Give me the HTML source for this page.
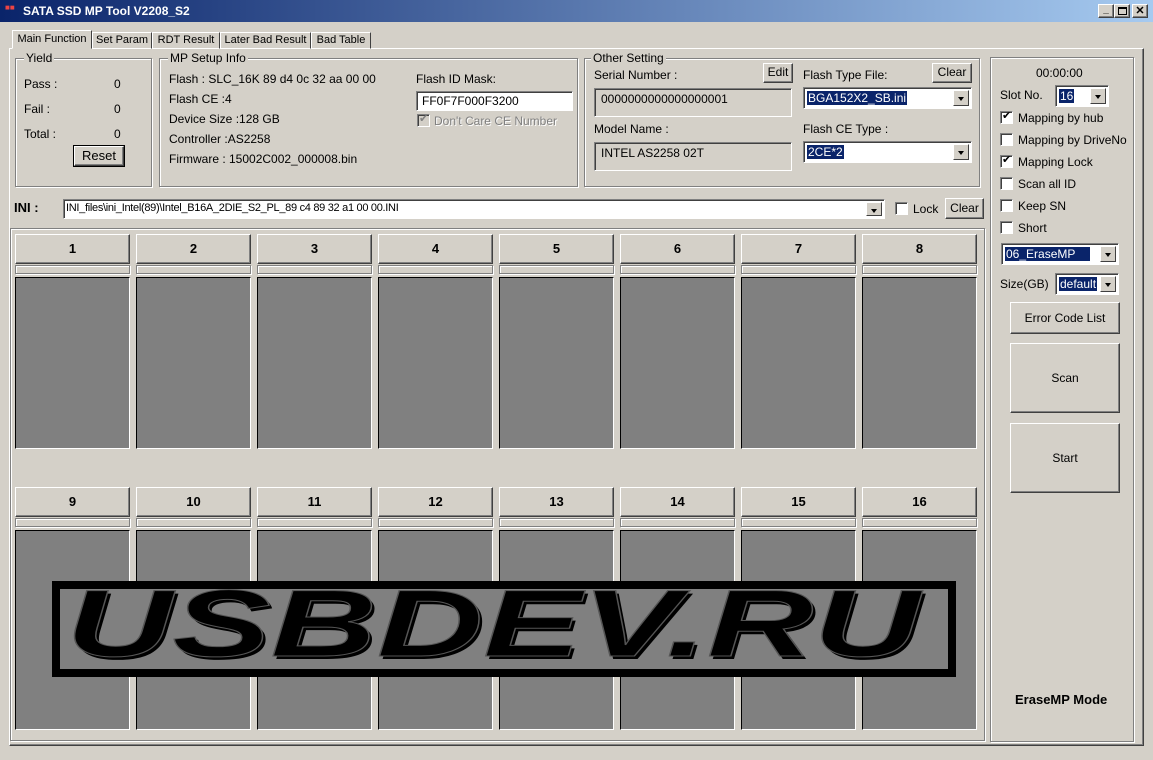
<!DOCTYPE html>
<html><head><meta charset="utf-8"><style>
*{box-sizing:border-box;margin:0;padding:0}
body{width:1153px;height:760px;background:#d4d0c8;font-family:"Liberation Sans",sans-serif;font-size:12px;color:#000;position:relative;overflow:hidden}
.a{position:absolute}
.r{position:absolute;background:#d4d0c8;border:1px solid;border-color:#fff #404040 #404040 #fff;box-shadow:inset -1px -1px #808080;text-align:center}
.s{position:absolute;background:#fff;border:1px solid;border-color:#808080 #fff #fff #808080;box-shadow:inset 1px 1px #404040}
.g{position:absolute;border:1px solid #808080;box-shadow:inset 1px 1px #fff,1px 1px #fff}
.gl{position:absolute;top:-8px;left:8px;background:#d4d0c8;padding:0 2px}
.sel{background:#0a246a;color:#fff;padding:0 1px}
.dd{position:absolute;right:2px;top:2px;width:16px;bottom:2px;background:#d4d0c8;border:1px solid;border-color:#fff #404040 #404040 #fff}
.dd:after{content:"";position:absolute;left:4px;top:6px;border:3px solid transparent;border-top:4px solid #000;border-bottom:0}
.cb{position:absolute;width:13px;height:13px;background:#fff;border:1px solid;border-color:#808080 #fff #fff #808080;box-shadow:inset 1px 1px #404040}
.ck:after{content:"\2714";position:absolute;left:1px;top:-3px;font-size:11px}
.h{height:30px;width:115px;font-weight:bold;font-size:13px;line-height:28px}
.b{height:9px;width:115px;border:1px solid #808080;box-shadow:inset 1px 1px #fff,1px 1px #fff}
.gb{width:115px;background:#808080;border:1px solid;border-color:#000 #fff #fff #000}
.tab{position:absolute;top:32px;height:17px;border:1px solid;border-color:#fff #404040 transparent #fff;font-size:11px;text-align:center;line-height:15px;white-space:nowrap}
</style></head><body>
<div class="a" style="left:0;top:0;width:1153px;height:22px;background:linear-gradient(90deg,#0a246a,#a6caf0)"></div>
<div class="a" style="left:5px;top:3px;color:#e44;font-size:8px">■■</div>
<div class="a" style="left:23px;top:4px;color:#fff;font-weight:bold;font-size:12px">SATA SSD MP Tool V2208_S2</div>
<div class="r" style="left:1098px;top:4px;width:16px;height:14px;font-size:10px;line-height:10px;font-weight:bold">_</div>
<div class="r" style="left:1114px;top:4px;width:16px;height:14px"><div class="a" style="left:3px;top:2px;width:9px;height:8px;border:1px solid #000;border-top-width:2px"></div></div>
<div class="r" style="left:1132px;top:4px;width:16px;height:14px;font-size:11px;line-height:12px;font-weight:bold">✕</div>
<div class="a" style="left:9px;top:48px;width:1135px;height:698px;border:1px solid;border-color:#fff #404040 #404040 #fff;box-shadow:inset -1px -1px #808080"></div>
<div class="tab" style="left:12px;top:30px;width:80px;height:19px;background:#d4d0c8;z-index:2;line-height:17px">Main Function</div>
<div class="tab" style="left:92px;width:60px">Set Param</div>
<div class="tab" style="left:152px;width:68px">RDT Result</div>
<div class="tab" style="left:220px;width:91px">Later Bad Result</div>
<div class="tab" style="left:311px;width:60px">Bad Table</div>

<div class="g" style="left:15px;top:58px;width:137px;height:129px"><span class="gl">Yield</span></div>
<div class="a" style="left:24px;top:77px">Pass :</div><div class="a" style="left:114px;top:77px">0</div>
<div class="a" style="left:24px;top:102px">Fail :</div><div class="a" style="left:114px;top:102px">0</div>
<div class="a" style="left:24px;top:127px">Total :</div><div class="a" style="left:114px;top:127px">0</div>
<div class="r" style="left:74px;top:146px;width:50px;height:20px;outline:1px solid #000;line-height:17px;font-size:13px">Reset</div>

<div class="g" style="left:159px;top:58px;width:419px;height:129px"><span class="gl">MP Setup Info</span></div>
<div class="a" style="left:169px;top:72px">Flash : SLC_16K 89 d4 0c 32 aa 00 00</div>
<div class="a" style="left:169px;top:92px">Flash CE :4</div>
<div class="a" style="left:169px;top:112px">Device Size :128 GB</div>
<div class="a" style="left:169px;top:132px">Controller :AS2258</div>
<div class="a" style="left:169px;top:152px">Firmware : 15002C002_000008.bin</div>
<div class="a" style="left:416px;top:72px">Flash ID Mask:</div>
<div class="s" style="left:416px;top:91px;width:157px;height:20px;padding:2px 5px">FF0F7F000F3200</div>
<div class="cb ck" style="left:417px;top:114px;background:#d4d0c8;color:#808080"></div>
<div class="a" style="left:434px;top:114px;color:#808080;text-shadow:1px 1px #fff">Don't Care CE Number</div>

<div class="g" style="left:584px;top:58px;width:396px;height:129px"><span class="gl" style="left:6px">Other Setting</span></div>
<div class="a" style="left:594px;top:68px">Serial Number :</div>
<div class="r" style="left:763px;top:63px;width:30px;height:20px;line-height:17px">Edit</div>
<div class="s" style="left:594px;top:88px;width:198px;height:29px;background:#d4d0c8;padding:3px 6px">0000000000000000001</div>
<div class="a" style="left:594px;top:122px">Model Name :</div>
<div class="s" style="left:594px;top:142px;width:198px;height:29px;background:#d4d0c8;padding:3px 6px">INTEL AS2258 02T</div>
<div class="a" style="left:803px;top:68px">Flash Type File:</div>
<div class="r" style="left:932px;top:63px;width:40px;height:20px;line-height:17px">Clear</div>
<div class="s" style="left:803px;top:87px;width:169px;height:22px;padding:3px 3px"><span class="sel">BGA152X2_SB.ini</span><div class="dd"></div></div>
<div class="a" style="left:803px;top:122px">Flash CE Type :</div>
<div class="s" style="left:803px;top:141px;width:169px;height:22px;padding:3px 3px"><span class="sel">2CE*2</span><div class="dd"></div></div>

<div class="a" style="left:14px;top:200px;font-weight:bold;font-size:13px">INI :</div>
<div class="s" style="left:63px;top:199px;width:822px;height:20px;padding:2px 2px;font-size:11px;letter-spacing:-0.3px">INI_files\ini_Intel(89)\Intel_B16A_2DIE_S2_PL_89 c4 89 32 a1 00 00.INI<div class="dd"></div></div>
<div class="cb" style="left:895px;top:202px"></div>
<div class="a" style="left:913px;top:202px">Lock</div>
<div class="r" style="left:945px;top:198px;width:39px;height:21px;line-height:18px">Clear</div>

<div class="g" style="left:10px;top:228px;width:975px;height:513px"></div>
<div class="a" style="left:15px;top:234px;width:970px">
<div class="r h" style="left:0;top:0">1</div><div class="r h" style="left:121px;top:0">2</div><div class="r h" style="left:242px;top:0">3</div><div class="r h" style="left:363px;top:0">4</div><div class="r h" style="left:484px;top:0">5</div><div class="r h" style="left:605px;top:0">6</div><div class="r h" style="left:726px;top:0">7</div><div class="r h" style="left:847px;top:0">8</div>
<div class="a b" style="left:0;top:31px"></div><div class="a b" style="left:121px;top:31px"></div><div class="a b" style="left:242px;top:31px"></div><div class="a b" style="left:363px;top:31px"></div><div class="a b" style="left:484px;top:31px"></div><div class="a b" style="left:605px;top:31px"></div><div class="a b" style="left:726px;top:31px"></div><div class="a b" style="left:847px;top:31px"></div>
<div class="a gb" style="left:0;top:43px;height:172px"></div><div class="a gb" style="left:121px;top:43px;height:172px"></div><div class="a gb" style="left:242px;top:43px;height:172px"></div><div class="a gb" style="left:363px;top:43px;height:172px"></div><div class="a gb" style="left:484px;top:43px;height:172px"></div><div class="a gb" style="left:605px;top:43px;height:172px"></div><div class="a gb" style="left:726px;top:43px;height:172px"></div><div class="a gb" style="left:847px;top:43px;height:172px"></div>
<div class="r h" style="left:0;top:253px">9</div><div class="r h" style="left:121px;top:253px">10</div><div class="r h" style="left:242px;top:253px">11</div><div class="r h" style="left:363px;top:253px">12</div><div class="r h" style="left:484px;top:253px">13</div><div class="r h" style="left:605px;top:253px">14</div><div class="r h" style="left:726px;top:253px">15</div><div class="r h" style="left:847px;top:253px">16</div>
<div class="a b" style="left:0;top:284px"></div><div class="a b" style="left:121px;top:284px"></div><div class="a b" style="left:242px;top:284px"></div><div class="a b" style="left:363px;top:284px"></div><div class="a b" style="left:484px;top:284px"></div><div class="a b" style="left:605px;top:284px"></div><div class="a b" style="left:726px;top:284px"></div><div class="a b" style="left:847px;top:284px"></div>
<div class="a gb" style="left:0;top:296px;height:200px"></div><div class="a gb" style="left:121px;top:296px;height:200px"></div><div class="a gb" style="left:242px;top:296px;height:200px"></div><div class="a gb" style="left:363px;top:296px;height:200px"></div><div class="a gb" style="left:484px;top:296px;height:200px"></div><div class="a gb" style="left:605px;top:296px;height:200px"></div><div class="a gb" style="left:726px;top:296px;height:200px"></div><div class="a gb" style="left:847px;top:296px;height:200px"></div>
</div>

<div class="a" style="left:52px;top:581px;width:904px;height:96px;border:8px solid #000;background:#808080;overflow:hidden">
<div class="a" style="left:6px;top:-12px;font-size:95px;line-height:95px;font-weight:bold;font-style:italic;font-family:'Liberation Sans',sans-serif;color:#000;transform:scaleX(1.55);transform-origin:0 0;text-shadow:2px 3px 0 #000;-webkit-text-stroke:1px #555;white-space:nowrap">USBDEV.RU</div>
</div>

<div class="g" style="left:990px;top:57px;width:144px;height:685px"></div>
<div class="a" style="left:1036px;top:66px">00:00:00</div>
<div class="a" style="left:1000px;top:88px">Slot No.</div>
<div class="s" style="left:1055px;top:85px;width:54px;height:22px;padding:3px 3px"><span class="sel">16</span><div class="dd"></div></div>
<div class="cb ck" style="left:1000px;top:111px"></div><div class="a" style="left:1018px;top:111px">Mapping by hub</div>
<div class="cb" style="left:1000px;top:133px"></div><div class="a" style="left:1018px;top:133px">Mapping by DriveNo</div>
<div class="cb ck" style="left:1000px;top:155px"></div><div class="a" style="left:1018px;top:155px">Mapping Lock</div>
<div class="cb" style="left:1000px;top:177px"></div><div class="a" style="left:1018px;top:177px">Scan all ID</div>
<div class="cb" style="left:1000px;top:199px"></div><div class="a" style="left:1018px;top:199px">Keep SN</div>
<div class="cb" style="left:1000px;top:221px"></div><div class="a" style="left:1018px;top:221px">Short</div>
<div class="s" style="left:1001px;top:243px;width:118px;height:22px;padding:3px 3px"><span class="sel">06_EraseMP&nbsp;&nbsp;&nbsp;&nbsp;</span><div class="dd"></div></div>
<div class="a" style="left:1000px;top:277px">Size(GB)</div>
<div class="s" style="left:1055px;top:273px;width:64px;height:22px;padding:3px 3px"><span class="sel">default</span><div class="dd"></div></div>
<div class="r" style="left:1010px;top:302px;width:110px;height:32px;line-height:30px">Error Code List</div>
<div class="r" style="left:1010px;top:343px;width:110px;height:70px;line-height:68px">Scan</div>
<div class="r" style="left:1010px;top:423px;width:110px;height:70px;line-height:68px">Start</div>
<div class="a" style="left:1015px;top:692px;font-weight:bold;font-size:13px">EraseMP Mode</div>
</body></html>
